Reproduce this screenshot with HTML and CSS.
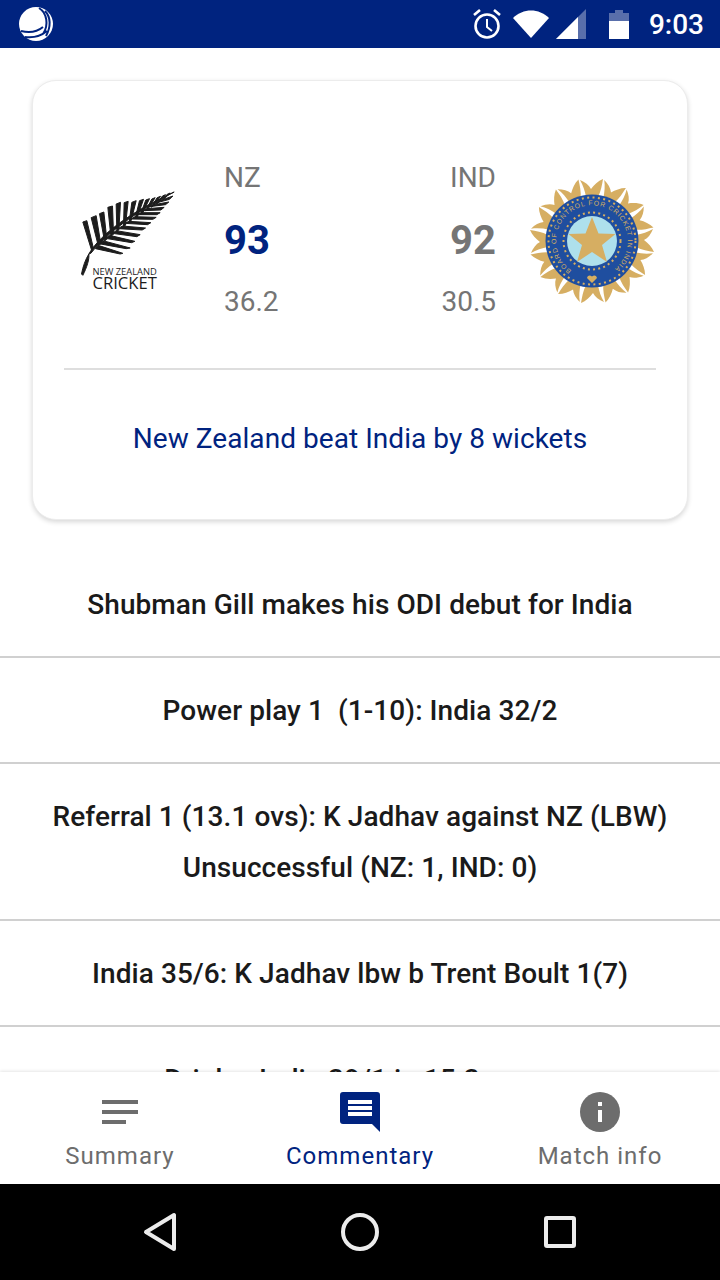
FILE: index.html
```html
<!DOCTYPE html>
<html lang="en">
<head>
  <meta charset="UTF-8" />
  <title>Match commentary</title>
  <link rel="stylesheet" href="styles.css">
</head>
<body>
  <div class="app">
    <header class="status-bar">
      <svg class="app-logo" viewBox="0 0 34 34" width="34" height="34">
        <ellipse cx="17" cy="17" rx="17" ry="17" fill="#fff"/>
        <path d="M20 1 C28 6 30 18 24 27 M26 4 C32 10 32 20 27 29 M2 24 C10 26 18 25 24 20 M6 30 C14 31 22 29 28 24" fill="none" stroke="#00237f" stroke-width="2"/>
      </svg>
      <div class="status-icons">
        <svg class="icon-alarm" viewBox="0 0 28 30" width="28" height="30">
          <circle cx="14" cy="17" r="11.5" fill="none" stroke="#fff" stroke-width="2.6"/>
          <path d="M14 10 V18 L19 22" fill="none" stroke="#fff" stroke-width="2"/>
          <path d="M1 6 L7 1 M27 6 L21 1" stroke="#fff" stroke-width="2.6"/>
        </svg>
        <svg class="icon-wifi" viewBox="0 0 36 28" width="36" height="28">
          <path d="M0 8 C10 -2 26 -2 36 8 L18 28 Z" fill="#fff"/>
        </svg>
        <svg class="icon-signal" viewBox="0 0 30 30" width="30" height="30">
          <path d="M0 30 L30 0 V30 Z" fill="#fff" fill-opacity="0.35"/>
          <path d="M0 30 L22 8 V30 Z" fill="#fff"/>
        </svg>
        <svg class="icon-battery" viewBox="0 0 20 29" width="20" height="29">
          <path d="M6 0 H14 V3 H20 V29 H0 V3 H6 Z" fill="#fff" fill-opacity="0.35"/>
          <rect y="11" width="20" height="18" fill="#fff"/>
        </svg>
        <span class="clock">9:03</span>
      </div>
    </header>

    <main class="content">
      <section class="score-card">
        <div class="score-row">
          <div class="team-logo">
            <svg viewBox="60 60 290 312" width="97" height="104">
              <g fill="#1c1c1c" stroke="#1c1c1c" stroke-width="3">
                <path d="M68 156 L80 152 L100 236 L94 240 Z"/>
                <path d="M93 143 L108 137 L122 222 L114 226 Z"/>
                <path d="M118 131 L131 126 L140 208 L133 213 Z"/>
                <path d="M143 112 L157 108 L160 193 L152 198 Z"/>
                <path d="M168 102 L181 97 L176 180 L170 184 Z"/>
                <path d="M192 98 L204 94 L196 166 L190 170 Z"/>
                <path d="M215 97 L228 92 L213 152 L207 157 Z"/>
                <path d="M238 92 L250 88 L232 140 L225 145 Z"/>
                <path d="M257 90 L268 86 L248 128 L241 133 Z"/>
                <path d="M275 87 L285 83 L263 118 L257 122 Z"/>
                <path d="M291 83 L301 79 L279 108 L273 112 Z"/>
                <path d="M307 78 L316 74 L294 99 L288 102 Z"/>
                <path d="M321 73 L330 69 L309 90 L304 93 Z"/>
                <path d="M106 236 L114 226 L188 250 L180 252 Z"/>
                <path d="M116 221 L128 212 L210 234 L198 236 Z"/>
                <path d="M136 205 L148 196 L224 214 L214 218 Z"/>
                <path d="M156 190 L168 182 L240 194 L230 200 Z"/>
                <path d="M174 176 L186 168 L256 174 L246 180 Z"/>
                <path d="M194 160 L206 154 L272 158 L262 164 Z"/>
                <path d="M214 147 L224 140 L288 142 L278 148 Z"/>
                <path d="M232 134 L242 128 L300 128 L290 134 Z"/>
                <path d="M250 122 L260 116 L312 112 L302 120 Z"/>
                <path d="M268 110 L276 105 L326 96 L316 104 Z"/>
                <path d="M284 100 L292 95 L338 78 L328 88 Z"/>
                <path d="M64 312 C68 290 76 268 86 252 C88 268 80 292 68 316 Z"/>
                <path d="M86 252 C110 210 180 140 342 66 C220 130 140 190 92 250 Z"/>
              </g>
              <text class="nz-small" x="97" y="315" textLength="193" lengthAdjust="spacingAndGlyphs">NEW ZEALAND</text>
              <text class="nz-large" x="97" y="358" textLength="193" lengthAdjust="spacingAndGlyphs">CRICKET</text>
            </svg>
          </div>
          <div class="team team-home">
            <span class="team-name">NZ</span>
            <span class="team-score">93</span>
            <span class="team-overs">36.2</span>
          </div>
          <div class="team team-away">
            <span class="team-name">IND</span>
            <span class="team-score">92</span>
            <span class="team-overs">30.5</span>
          </div>
          <div class="team-crest">
            <svg viewBox="-63 -63 126 126" width="126" height="126">
              <defs>
                <path id="ray" d="M-6 -44 C-7 -50 -9 -56 -12 -61 C-7 -59 -3 -56 -1 -52 C2 -56 6 -60 11 -62 C10 -56 9 -50 6 -44 Z" fill="#d6ae62"/>
                <path id="arc" d="M-20.6 29.3 A35.8 35.8 0 1 1 20.6 29.3" fill="none"/>
              </defs>
              <use href="#ray"/>
              <use href="#ray" transform="rotate(22.5)"/>
              <use href="#ray" transform="rotate(45)"/>
              <use href="#ray" transform="rotate(67.5)"/>
              <use href="#ray" transform="rotate(90)"/>
              <use href="#ray" transform="rotate(112.5)"/>
              <use href="#ray" transform="rotate(135)"/>
              <use href="#ray" transform="rotate(157.5)"/>
              <use href="#ray" transform="rotate(180)"/>
              <use href="#ray" transform="rotate(202.5)"/>
              <use href="#ray" transform="rotate(225)"/>
              <use href="#ray" transform="rotate(247.5)"/>
              <use href="#ray" transform="rotate(270)"/>
              <use href="#ray" transform="rotate(292.5)"/>
              <use href="#ray" transform="rotate(315)"/>
              <use href="#ray" transform="rotate(337.5)"/>
              <circle r="46.5" fill="#1f4e9f"/>
              <circle r="43.5" fill="none" stroke="#d6ae62" stroke-width="2" stroke-dasharray="2 3.4"/>
              <circle r="28.5" fill="none" stroke="#d6ae62" stroke-width="2" stroke-dasharray="2 3.2"/>
              <circle r="25" fill="#aee0ec"/>
              <path d="M0 -24 L6.5 -7.5 L23.5 -7 L10 4 L15 21 L0 11 L-15 21 L-10 4 L-23.5 -7 L-6.5 -7.5 Z" fill="#d6ae62"/>
              <text class="crest-text"><textPath href="#arc" textLength="178">BOARD OF CONTROL FOR CRICKET IN INDIA</textPath></text>
              <path d="M0 42 L-5 37 C-4 34 -2 34 0 35.5 C2 34 4 34 5 37 Z" fill="#d6ae62"/>
            </svg>
          </div>
        </div>
        <p class="result">New Zealand beat India by 8 wickets</p>
      </section>

      <ul class="commentary">
        <li>Shubman Gill makes his ODI debut for India</li>
        <li>Power play 1&nbsp; (1-10): India 32/2</li>
        <li>Referral 1 (13.1 ovs): K Jadhav against NZ (LBW)<br>Unsuccessful (NZ: 1, IND: 0)</li>
        <li>India 35/6: K Jadhav lbw b Trent Boult 1(7)</li>
        <li>Drinks: India 39/1 in 15.3 overs</li>
      </ul>
    </main>

    <nav class="tabs">
      <a class="tab">
        <svg viewBox="0 0 40 40" width="40" height="40">
          <path d="M2 8 H38 V12 H2 Z M2 18 H38 V22 H2 Z M2 28 H26 V32 H2 Z" fill="#6d6d6d"/>
        </svg>
        <span>Summary</span>
      </a>
      <a class="tab tab-active">
        <svg viewBox="0 0 40 40" width="40" height="40">
          <path d="M3 0 H37 A3 3 0 0 1 40 3 V40 L32 32 H3 A3 3 0 0 1 0 29 V3 A3 3 0 0 1 3 0 Z" fill="#00237f"/>
          <path d="M8 8 H32 V12 H8 Z M8 14 H32 V18 H8 Z M8 20 H32 V24 H8 Z" fill="#fff"/>
        </svg>
        <span>Commentary</span>
      </a>
      <a class="tab">
        <svg viewBox="0 0 40 40" width="40" height="40">
          <circle cx="20" cy="20" r="20" fill="#6d6d6d"/>
          <path d="M18 18 H22 V30 H18 Z M18 10 H22 V14 H18 Z" fill="#fff"/>
        </svg>
        <span>Match info</span>
      </a>
    </nav>

    <footer class="nav-bar">
      <svg viewBox="0 0 34 40" width="34" height="40">
        <path d="M31 3 V37 L3 20 Z" fill="none" stroke="#ececec" stroke-width="4" stroke-linejoin="round"/>
      </svg>
      <svg viewBox="0 0 40 40" width="40" height="40">
        <circle cx="20" cy="20" r="17" fill="none" stroke="#ececec" stroke-width="4"/>
      </svg>
      <svg viewBox="0 0 34 34" width="34" height="34">
        <rect x="3" y="3" width="28" height="28" rx="1" fill="none" stroke="#ececec" stroke-width="4"/>
      </svg>
    </footer>
  </div>
</body>
</html>
```

FILE: styles.css
```css
html, body {
  margin: 0;
  padding: 0;
  background: white;
  font-family: Roboto, "Liberation Sans", sans-serif;
}

.app {
  width: 720px;
  height: 1280px;
  display: flex;
  flex-direction: column;
  overflow: hidden;
}

/* Status bar */
.status-bar {
  height: 48px;
  flex: none;
  background: #00237f;
  display: flex;
  align-items: center;
  justify-content: space-between;
  padding: 0 16px 0 19px;
  box-sizing: border-box;
}
.status-icons {
  display: flex;
  align-items: center;
}
.icon-alarm { margin-right: 12px; }
.icon-wifi { margin-right: 7px; }
.icon-signal { margin-right: 23px; }
.icon-battery { margin-right: 20px; }
.clock {
  color: white;
  font-size: 28px;
  font-weight: 500;
}

/* Score card */
.content {
  flex: 1;
  min-height: 0;
  overflow: hidden;
}
.score-card {
  margin: 32px 32px 32px;
  height: 440px;
  padding: 65px 31px 0;
  box-sizing: border-box;
  background: white;
  border: 1px solid #ececec;
  border-radius: 24px;
  box-shadow: 0 2px 5px rgba(0, 0, 0, 0.16);
}
.score-row {
  display: flex;
  align-items: center;
  height: 224px;
  padding: 0 1px 36px 16px;
  box-sizing: border-box;
  border-bottom: 2px solid #dedede;
}
.team-logo {
  width: 144px;
  flex: none;
  margin-top: 6px;
}
.team-logo svg {
  display: block;
}
.nz-small {
  font-family: "Open Sans", sans-serif;
  font-size: 25px;
  fill: #1c1c1c;
}
.nz-large {
  font-family: "Open Sans", sans-serif;
  font-size: 49px;
  fill: #1c1c1c;
}
.team {
  flex: 1;
  display: flex;
  flex-direction: column;
  margin-top: 1px;
  color: #757575;
  font-size: 28px;
  line-height: 62px;
}
.team-away {
  text-align: right;
}
.team-score {
  font-size: 40px;
  font-weight: 700;
  padding-top: 1px;
}
.team-overs {
  line-height: 60px;
}
.team-home .team-score {
  color: #00237f;
}
.team-crest {
  width: 126px;
  flex: none;
  margin-left: 33px;
  margin-top: 4px;
}
.team-crest svg {
  display: block;
}
.crest-text {
  font-family: "Liberation Sans", sans-serif;
  font-size: 6.8px;
  fill: #d6ae62;
}
.result {
  margin: 49px 0 0;
  text-align: center;
  color: #00237f;
  font-size: 28px;
  line-height: 40px;
  letter-spacing: 0.05px;
}

/* Commentary list */
.commentary {
  list-style: none;
  margin: 0;
  padding: 0;
}
.commentary li {
  padding: 27px 20px 26px;
  border-bottom: 2px solid #d0d0d0;
  text-align: center;
  color: #1a1a1a;
  font-size: 28px;
  font-weight: 500;
  line-height: 51px;
  letter-spacing: 0.07px;
}

/* Bottom tabs */
.tabs {
  height: 112px;
  flex: none;
  background: white;
  display: flex;
  box-shadow: 0 -1px 3px rgba(0, 0, 0, 0.1);
  position: relative;
}
.tab {
  flex: 1;
  display: flex;
  flex-direction: column;
  align-items: center;
  padding-top: 20px;
  color: #6d6d6d;
  font-size: 24px;
  letter-spacing: 1px;
}
.tab svg {
  display: block;
}
.tab span {
  margin-top: 6px;
  line-height: 36px;
}
.tab-active {
  color: #00237f;
}

/* Android nav bar */
.nav-bar {
  height: 96px;
  flex: none;
  background: black;
  display: flex;
  align-items: center;
  justify-content: space-between;
  padding: 0 143px;
}
```
